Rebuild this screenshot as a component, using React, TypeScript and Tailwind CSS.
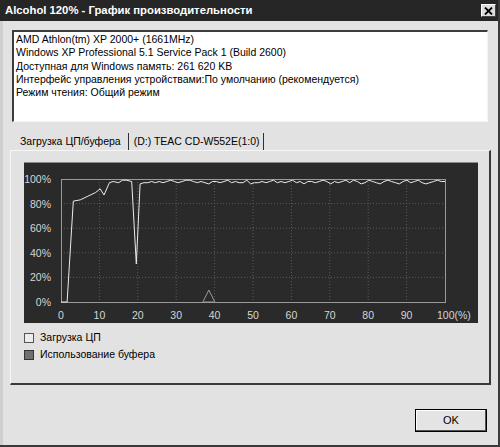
import React from 'react';

const FONT = { fontFamily: '"Liberation Sans", Arial, sans-serif' };

// CPU load samples: [x in %, y in %]
const cpuHead: [number, number][] = [
  [0, 0], [1.6, 0], [3.2, 82], [5, 83], [7, 86], [9, 89], [10.2, 92], [11.2, 87],
  [12.6, 97], [13.6, 98], [15, 97], [16, 99], [17, 99], [18.4, 98], [19.6, 31], [20.6, 96],
];

// small wiggles along the top after the dip
const tail = [
  97, 97, 98, 97, 98, 97, 98, 99, 98, 97, 98, 99, 99, 98, 97, 98, 97, 96, 98, 98,
  97, 98, 99, 97, 98, 97, 97, 99, 96, 97, 97, 98, 97, 98, 99, 97, 98, 97, 98, 99,
  97, 98, 96, 98, 98, 97, 98, 99, 98, 96, 98, 97, 98, 99, 97, 99, 98, 96, 97, 99,
  98, 97, 96, 98, 99, 98, 97, 96, 98, 99, 97, 98, 99, 97, 96, 97, 98, 99, 98, 98,
];

const cpuPoints: [number, number][] = [
  ...cpuHead,
  ...tail.map((v, i): [number, number] => [21.6 + i * (78.4 / (tail.length - 1)), v]),
];

const X0 = 37;
const Y0 = 139;
const W = 384;
const H = 123;

const px = (x: number) => X0 + (x * W) / 100;
const py = (y: number) => Y0 - (y * H) / 100;

const PerfChart = () => {
  const pts = cpuPoints.map(([x, y]) => `${px(x).toFixed(1)},${py(y).toFixed(1)}`).join(' ');
  const yLabels = [100, 80, 60, 40, 20, 0];
  const xLabels = [0, 10, 20, 30, 40, 50, 60, 70, 80, 90];

  return (
    <svg width="454" height="161" className="block" style={FONT}>
      {/* grid */}
      {[1, 2, 3, 4, 5, 6, 7, 8, 9].map((k) => (
        <line
          key={'v' + k}
          x1={px(k * 10)}
          x2={px(k * 10)}
          y1={py(100)}
          y2={py(0)}
          stroke="#5a5a5a"
          strokeDasharray="1 2"
        />
      ))}
      {[1, 2, 3, 4].map((k) => (
        <line
          key={'h' + k}
          x1={px(0)}
          x2={px(100)}
          y1={py(k * 20)}
          y2={py(k * 20)}
          stroke="#5a5a5a"
          strokeDasharray="1 2"
        />
      ))}
      <rect x={X0 + 0.5} y={py(100) + 0.5} width={W} height={H} fill="none" stroke="#9a9a9a" />

      {/* axis labels */}
      {yLabels.map((v) => (
        <text key={v} x="27" y={py(v) + 4} textAnchor="end" fontSize="10.5" fill="#d6d6d6">
          {v}%
        </text>
      ))}
      {xLabels.map((v) => (
        <text key={v} x={px(v)} y="156" textAnchor="middle" fontSize="10.5" fill="#d6d6d6">
          {v}
        </text>
      ))}
      <text x="413" y="156" fontSize="10.5" fill="#d6d6d6">
        100(%)
      </text>

      {/* marker */}
      <polygon
        points={`${px(38.5) - 6},${Y0} ${px(38.5)},${Y0 - 12} ${px(38.5) + 6},${Y0}`}
        fill="none"
        stroke="#9a9a9a"
      />

      {/* cpu line */}
      <polyline points={pts} fill="none" stroke="#ececec" strokeWidth="1" strokeLinejoin="round" />
    </svg>
  );
};

const infoLines = [
  'AMD Athlon(tm) XP 2000+ (1661MHz)',
  'Windows XP Professional 5.1 Service Pack 1 (Build 2600)',
  'Доступная для Windows память: 261 620 KB',
  'Интерфейс управления устройствами:По умолчанию (рекомендуется)',
  'Режим чтения: Общий режим',
];

export default function App() {
  return (
    <div
      className="w-[500px] h-[447px] bg-[#e2e2e2] flex flex-col border-r-2 border-b-2 border-[#3a3a3a] text-[10.5px] text-black overflow-hidden"
      style={FONT}
    >
      {/* title bar */}
      <div className="h-[21px] shrink-0 bg-[#262626] flex items-center justify-between pl-[5px] pr-[2px]">
        <span className="text-white font-bold text-[11.3px] leading-none">
          Alcohol 120% - График производительности
        </span>
        <div className="w-[15px] h-[13px] bg-[#dcdcdc] border-t border-l border-white border-r border-b border-r-[#444] border-b-[#444] flex items-center justify-center">
          <svg width="9" height="8" viewBox="0 0 9 8">
            <path d="M1 0.5 L8 7.5 M8 0.5 L1 7.5" stroke="#000" strokeWidth="1.8" />
          </svg>
        </div>
      </div>

      <div className="flex-1 flex flex-col border-l-[3px] border-[#cfcfcf]">
        {/* info box */}
        <div className="mt-[9px] ml-[9px] mr-[10px] h-[92px] bg-white border-t-2 border-l-2 border-[#3c3c3c] border-r border-b border-r-[#f4f4f4] border-b-[#f4f4f4] pl-[2px] pt-[1px] leading-[13.3px]">
          {infoLines.map((l) => (
            <div key={l}>{l}</div>
          ))}
        </div>

        {/* tabs */}
        <div className="mt-[11px] ml-[10px] flex h-[17px] items-stretch">
          <div className="px-[7px] flex items-center border-r border-[#303030]">Загрузка ЦП/буфера</div>
          <div className="ml-[2px] px-[3px] flex items-center border-r border-[#303030]">
            (D:) TEAC CD-W552E(1:0)
          </div>
        </div>

        {/* tab panel */}
        <div className="ml-[7px] mr-[7px] h-[235px] border-t border-l border-[#f6f6f6] border-r-2 border-b-2 border-r-[#3a3a3a] border-b-[#3a3a3a] pt-[11px] pl-[13px]">
          <div className="w-[454px] h-[161px] bg-[#2a2a2a] border-t border-[#8a8a8a]">
            <PerfChart />
          </div>
          <div className="mt-[10px] flex flex-col gap-[7px]">
            <div className="flex items-center gap-[6px] h-[10px]">
              <div className="w-[10px] h-[10px] bg-[#ececec] border border-[#555]" />
              <span>Загрузка ЦП</span>
            </div>
            <div className="flex items-center gap-[6px] h-[10px]">
              <div className="w-[10px] h-[10px] bg-[#707070] border border-[#333]" />
              <span>Использование буфера</span>
            </div>
          </div>
        </div>

        {/* footer */}
        <div className="flex justify-end mt-[24px] mr-[11px]">
          <button className="w-[72px] h-[23px] bg-[#e4e4e4] border border-black shadow-[inset_-1px_-1px_0_#555,inset_1px_1px_0_#fff] text-[11px]">
            OK
          </button>
        </div>
      </div>
    </div>
  );
}
